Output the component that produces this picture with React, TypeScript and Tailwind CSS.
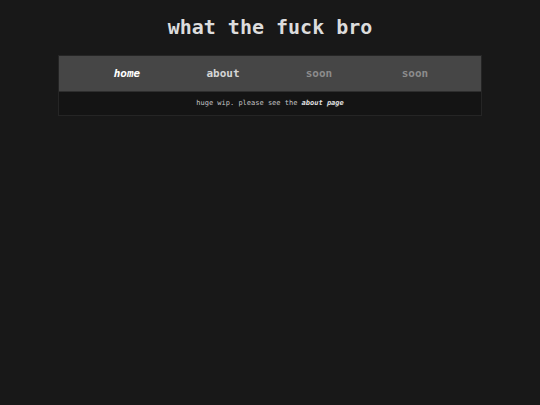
export default function App() {
  return (
    <div className="min-h-[405px] w-full bg-[#181818] pt-[13px]" style={{ fontFamily: '"DejaVu Sans Mono", monospace' }}>
      <h1 className="text-center text-[20px] leading-[28px] font-bold text-[#dcdcdc]">what the fuck bro</h1>
      <div className="mx-auto mt-[14px] w-[424px] border border-[#252525] bg-[#141414]">
        <nav className="grid h-[36px] grid-cols-[96px_96px_96px_96px] items-center justify-center border-b border-[#2e2e2e] bg-[#464646] pl-[2px] pt-[2px] text-[11px] font-bold">
          <span className="text-center italic text-white">home</span>
          <span className="text-center text-[#d4d4d4]">about</span>
          <span className="text-center text-[#8c8c8c]">soon</span>
          <span className="text-center text-[#8c8c8c]">soon</span>
        </nav>
        <p className="h-[23px] text-center text-[7px] leading-[22px] text-[#c4c4c4]">
          huge wip. please see the <em className="font-bold text-[#e0e0e0]">about page</em>
        </p>
      </div>
    </div>
  );
}
